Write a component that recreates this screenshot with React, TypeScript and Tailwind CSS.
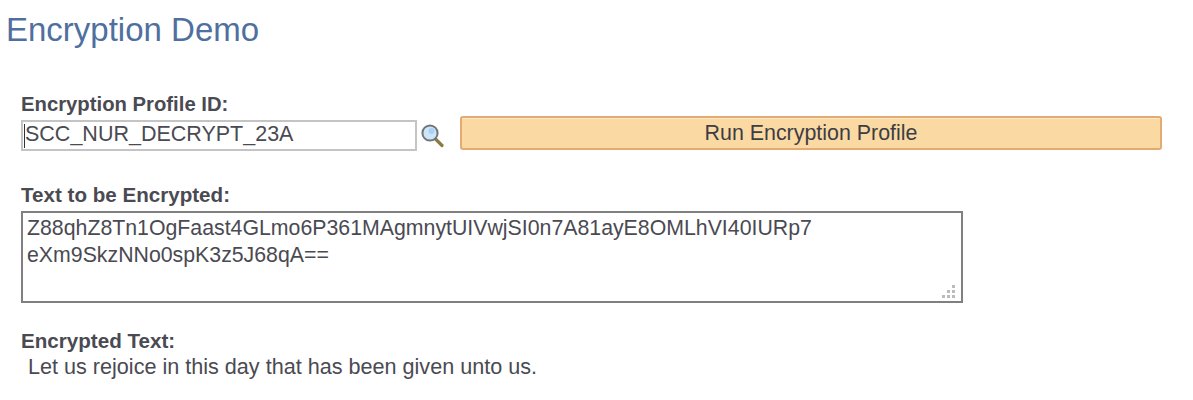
const sans = "font-['Liberation_Sans',Arial,sans-serif]";

function SearchIcon() {
  return (
    <svg width="26" height="26" viewBox="0 0 26 26" className="mt-[3px] ml-[2px] shrink-0">
      <path d="M16 16.5L23 23.5" stroke="#8a7a45" strokeWidth="3.2" strokeLinecap="round" />
      <circle cx="11" cy="11" r="7.6" fill="#cfe4f8" stroke="#6f7679" strokeWidth="2" />
      <circle cx="12.5" cy="9" r="3" fill="#a9d0f5" />
    </svg>
  );
}

export default function App() {
  return (
    <div className={`${sans} w-[1193px] h-[400px] overflow-hidden bg-white text-[#4a4a52]`}>
      <h1 className="pl-[6px] pt-[12px] h-[92px] text-[33px] leading-[36px] text-[#4f6f9f]">
        Encryption Demo
      </h1>

      <div className="pl-[21px]">
        <div className="flex items-start">
          <div className="w-[396px]">
            <label className="block h-[28px] text-[20.3px] leading-[24px] font-bold">
              Encryption Profile ID:
            </label>
            <div className="flex items-center w-[396px] h-[31px] pl-[1px] pb-[4px] border-2 border-[#c4c4c4] text-[21.5px] leading-[24px]">
              <span className="w-[1px] h-[24px] mt-[4px] bg-[#333] shrink-0" />
              <span>SCC_NUR_DECRYPT_23A</span>
            </div>
          </div>
          <div className="mt-[27px]">
            <SearchIcon />
          </div>
          <button className="mt-[24px] ml-[15px] w-[702px] h-[34px] rounded-[3px] border-2 border-[#e3aa72] bg-[#fbd9a3] shadow-[inset_0_1px_0_#fde9c8] text-[21.4px] leading-[24px] text-[#3d3d45]">
            Run Encryption Profile
          </button>
        </div>

        <label className="block mt-[32px] h-[28px] text-[20.6px] leading-[24px] font-bold">
          Text to be Encrypted:
        </label>
        <div className="relative w-[942px] h-[92px] border-2 border-[#808080] pl-[4px] pt-[2px] text-[21.3px] leading-[27px]">
          <div>Z88qhZ8Tn1OgFaast4GLmo6P361MAgmnytUIVwjSI0n7A81ayE8OMLhVI40IURp7</div>
          <div>eXm9SkzNNo0spK3z5J68qA==</div>
          <div className="absolute right-[6px] bottom-[3px] grid grid-cols-3 gap-[2px] w-[13px]">
            <span />
            <span />
            <span className="size-[3px] bg-[#bbb]" />
            <span />
            <span className="size-[3px] bg-[#bbb]" />
            <span className="size-[3px] bg-[#bbb]" />
            <span className="size-[3px] bg-[#bbb]" />
            <span className="size-[3px] bg-[#bbb]" />
            <span className="size-[3px] bg-[#bbb]" />
          </div>
        </div>

        <label className="block mt-[26px] h-[24px] text-[20.6px] leading-[24px] font-bold">
          Encrypted Text:
        </label>
        <p className="pl-[7px] mt-[2px] text-[21.6px] leading-[24px]">
          Let us rejoice in this day that has been given unto us.
        </p>
      </div>
    </div>
  );
}
